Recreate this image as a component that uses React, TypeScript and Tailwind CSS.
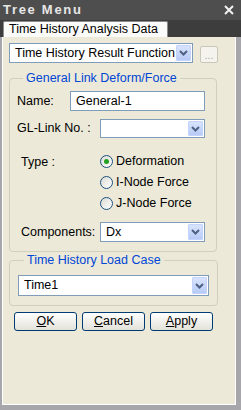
import React, { useState } from "react";

const font = { fontFamily: '"Liberation Sans", Arial, sans-serif' };

function Arrow() {
  return (
    <div className="w-[15px] h-full flex items-center justify-center bg-gradient-to-b from-[#d8e4fc] to-[#b7cbf6] border border-[#c3d3fd] rounded-[1px]">
      <svg width="9" height="6" viewBox="0 0 9 6">
        <path d="M1 1 L4.5 4.5 L8 1" stroke="#4d6185" strokeWidth="2" fill="none" />
      </svg>
    </div>
  );
}

function Select({ value, className }: { value: string; className: string }) {
  return (
    <div className={`flex items-stretch bg-white border border-[#7f9db9] p-[1px] ${className}`}>
      <div className="flex-1 overflow-hidden whitespace-nowrap pl-[4px] flex items-center">{value}</div>
      <Arrow />
    </div>
  );
}

function Radio({ label, checked, onClick }: { label: string; checked: boolean; onClick: () => void }) {
  return (
    <div className="flex items-center h-[21px] cursor-default" onClick={onClick}>
      <div className="w-[13px] h-[13px] rounded-full border border-[#1c5180] bg-gradient-to-br from-[#dcdcd4] to-white flex items-center justify-center">
        {checked && <div className="w-[5px] h-[5px] rounded-full bg-[#21a121]" />}
      </div>
      <span className="ml-[3px]">{label}</span>
    </div>
  );
}

function Btn({ first, rest }: { first: string; rest: string }) {
  return (
    <button className="h-[19px] w-[63px] rounded-[3px] border border-[#003c74] bg-gradient-to-b from-white to-[#e3e2da] flex items-center justify-center leading-none">
      <span className="underline">{first}</span>
      {rest}
    </button>
  );
}

export default function App() {
  const [type, setType] = useState("Deformation");

  return (
    <div style={font} className="w-[241px] h-[410px] flex flex-col text-[12.5px] text-black bg-[#ece9d8] overflow-hidden">
      <div className="h-[20px] bg-[#4e4e4e] flex items-center justify-between px-[3px]">
        <span className="text-[#e6e6e6] font-bold text-[13px] tracking-[1.7px]">Tree Menu</span>
        <svg width="10" height="10" viewBox="0 0 10 10" className="mr-[4px]">
          <path d="M1 1 L9 9 M9 1 L1 9" stroke="#f2f2f2" strokeWidth="2" />
        </svg>
      </div>
      <div className="h-[17px] bg-[#3d3d3d] flex items-end pl-[3px]">
        <div className="h-[16px] w-[165px] bg-[#fbfbf9] border border-b-0 border-[#8c8c8c] rounded-t-[2px] pl-[5px] leading-[15px] whitespace-nowrap">
          Time History Analysis Data
        </div>
      </div>
      <div className="flex-1 border-l-2 border-r-[5px] border-b-[5px] border-[#a7a6aa]">
        <div className="h-full border-l border-r border-b border-white pl-[6px] pt-[6px]">
          <div className="flex items-center">
            <Select value="Time History Result Function" className="w-[184px] h-[20px]" />
            <div className="ml-[7px] w-[18px] h-[17px] mt-[3px] border border-[#c9c7ba] rounded-[2px] bg-[#f4f3ee] text-[#aca899] text-[10px] flex items-end justify-center leading-[12px]">
              ...
            </div>
          </div>

          <fieldset className="mt-[9px] w-[208px] h-[180px] border border-[#d0d0bf] rounded-[4px] pl-[7px] pr-[11px]">
            <legend className="ml-[6px] px-[3px] text-[#0046d5] leading-[12px]">General Link Deform/Force</legend>
            <div className="flex items-center mt-[7px] h-[20px]">
              <span className="w-[53px]">Name:</span>
              <div className="flex-1 h-[20px] bg-white border border-[#7f9db9] pl-[5px] flex items-center">General-1</div>
            </div>
            <div className="flex items-center mt-[8px] h-[19px]">
              <span className="w-[83px]">GL-Link No. :</span>
              <Select value="" className="flex-1 h-[19px]" />
            </div>
            <div className="flex mt-[13px]">
              <span className="w-[83px] pl-[4px] pt-[2px]">Type :</span>
              <div className="flex flex-col">
                {["Deformation", "I-Node Force", "J-Node Force"].map((t) => (
                  <Radio key={t} label={t} checked={type === t} onClick={() => setType(t)} />
                ))}
              </div>
            </div>
            <div className="flex items-center mt-[8px] h-[20px]">
              <span className="w-[83px] pl-[4px]">Components:</span>
              <Select value="Dx" className="flex-1 h-[20px]" />
            </div>
          </fieldset>

          <fieldset className="mt-[2px] w-[208px] h-[52px] border border-[#d0d0bf] rounded-[4px] px-[8px]">
            <legend className="ml-[6px] px-[3px] text-[#0046d5] leading-[12px]">Time History Load Case</legend>
            <Select value="Time1" className="mt-[9px] w-[191px] h-[21px]" />
          </fieldset>

          <div className="flex gap-[5px] mt-[6px] pl-[5px]">
            <Btn first="O" rest="K" />
            <Btn first="C" rest="ancel" />
            <Btn first="A" rest="pply" />
          </div>
        </div>
      </div>
    </div>
  );
}
